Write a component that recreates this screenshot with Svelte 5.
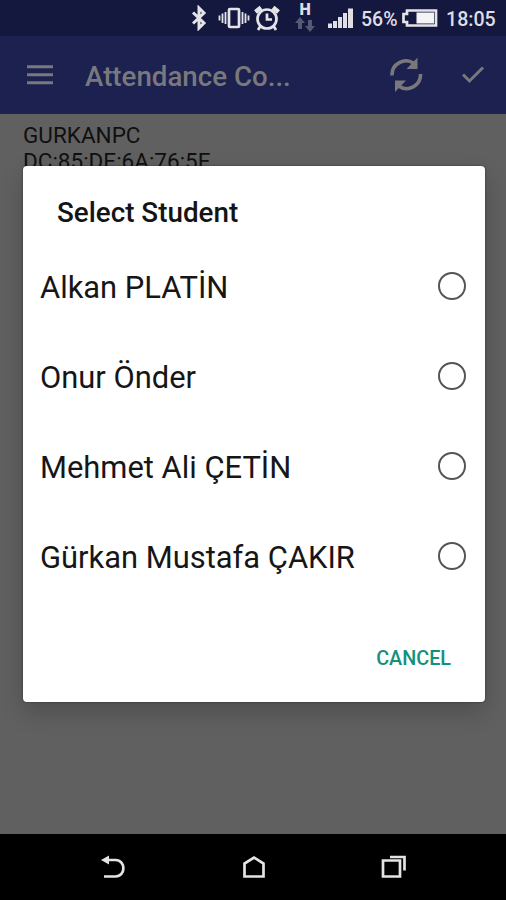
<script>
	const device = { name: 'GURKANPC', address: 'DC:85:DE:6A:76:5E' };
	const students = ['Alkan PLATİN', 'Onur Önder', 'Mehmet Ali ÇETİN', 'Gürkan Mustafa ÇAKIR'];

	let selected = $state(null);
	let open = $state(true);
</script>

<div class="screen">
	<div class="status">
		<svg class="bluetooth" width="16" height="26" viewBox="0 0 16 26">
			<path d="M2 7.5L13 18L8 23V3L13 8L2 18.5" />
		</svg>
		<svg class="vibrate" width="32" height="24" viewBox="0 0 32 24">
			<rect x="11" y="3" width="10" height="18" rx="1" />
			<path class="thin" d="M7.500 6V18M24.500 6V18M4.500 7.500V17M27.500 7.500V17M1.500 9.500V14.500M30.500 9.500V14.500" />
		</svg>
		<svg class="alarm" width="26" height="26" viewBox="0 0 26 26">
			<circle cx="13" cy="14" r="9.500" />
			<path d="M13 8.500V14.500H18M6.500 21L4 25M19.500 21L22 25" />
			<path class="bells" d="M1.500 7L7 2.500M19 2.500L24.500 7" />
		</svg>
		<div class="network">
			<span>H</span>
			<svg width="22" height="16" viewBox="0 0 22 16">
				<path d="M6 0L11 6H8V12H4V6H1ZM16 15L11 9H14V3H18V9H21Z" />
			</svg>
		</div>
		<svg class="signal" width="27" height="20" viewBox="0 0 27 20">
			<path d="M1 15.500H5V20H1ZM6 13H10V20H6ZM11 9H15V20H11ZM16 5H20V20H16ZM21 0.500H26V20H21Z" />
		</svg>
		<span class="percent">56%</span>
		<svg class="battery" width="36" height="18" viewBox="0 0 36 18">
			<path d="M5 1.500H34V16.500H5V13H1.500V5H5Z" />
			<rect x="14.500" y="3.500" width="17.500" height="11" />
		</svg>
		<span class="clock">18:05</span>
	</div>

	<header class="toolbar">
		<svg class="menu" width="28" height="20" viewBox="0 0 28 20">
			<path d="M1 1.700H27M1 9.700H27M1 17.700H27" />
		</svg>
		<h1>Attendance Co...</h1>
		<svg class="refresh" width="34" height="36" viewBox="0 0 34 36">
			<path class="arc" d="M3 18.500A14 14 0 0 1 25 6.500M31.500 17A14 14 0 0 1 9.500 29" />
			<path class="head" d="M28.500 0.500V12H17.500ZM6 35V23.500H17Z" />
		</svg>
		<svg class="check" width="24" height="20" viewBox="0 0 24 20">
			<path d="M2 9.500L8.500 16L22 2.500" />
		</svg>
	</header>

	<main>
		<p>{device.name}</p>
		<p>{device.address}</p>
	</main>

	{#if open}
		<div class="dialog" role="dialog" aria-label="Select Student">
			<h2>Select Student</h2>
			<div class="options">
				{#each students as student}
					<button class="option" onclick={() => (selected = student)}>
						<span>{student}</span>
						<i class="radio" class:on={selected === student}></i>
					</button>
				{/each}
			</div>
			<div class="actions">
				<button class="cancel" onclick={() => (open = false)}>CANCEL</button>
			</div>
		</div>
	{/if}

	<nav>
		<svg width="28" height="26" viewBox="0 0 28 26">
			<path d="M6 6H15.500C26 6 26 22.500 15.500 22.500H4" />
			<path class="tip" d="M1 6L9 1.500V10.500Z" />
		</svg>
		<svg width="28" height="26" viewBox="0 0 28 26">
			<path d="M4.500 22.500V9.500L14 3.500L23.500 9.500V22.500Z" />
		</svg>
		<svg width="28" height="26" viewBox="0 0 28 26">
			<path d="M3 6.500H20V22.500H3ZM10 3H24.500V16.500" />
		</svg>
	</nav>
</div>

<style>
	:global(body) {
		background: #606060;
	}

	.screen {
		position: relative;
		display: flex;
		flex-direction: column;
		height: 900px;
		overflow: hidden;
		background: #606060;
		font-family: Roboto, sans-serif;
	}

	svg {
		flex: none;
		fill: none;
		stroke: #e4e4e8;
		stroke-width: 2.7;
	}

	h1, h2, p { margin: 0; }

	button {
		padding: 0;
		border: 0;
		background: none;
		font-family: inherit;
		cursor: pointer;
	}

	.status {
		display: flex;
		align-items: center;
		height: 36px;
		padding-left: 191px;
		background: #14183f;
		color: #dedee4;
	}

	.bluetooth { stroke-width: 3; }
	.vibrate { margin-left: 11px; }
	.vibrate .thin { stroke-width: 1.8; }
	.alarm { margin-left: 4px; }
	.alarm .bells { stroke-width: 4.5; }

	.network {
		display: flex;
		flex-direction: column;
		align-items: center;
		margin-left: 14px;
		font-size: 16px;
		font-weight: 900;
		line-height: 14px;
	}
	.network svg { fill: #555974; stroke: none; }

	.signal { margin-left: 11px; fill: #dedee4; stroke: none; }
	.percent { width: 40px; margin-left: 7px; padding-top: 2px; font-size: 19.5px; font-weight: 500; }
	.battery { margin-left: 1px; }
	.battery rect { fill: #f4f4f6; stroke: none; }
	.clock { margin-left: 8px; padding-top: 2px; font-size: 19.6px; font-weight: 500; }

	.toolbar {
		display: flex;
		align-items: center;
		height: 78px;
		padding: 0 21px 0 26px;
		background: #1c214f;
	}
	.toolbar svg { stroke: #79797d; stroke-width: 3; }

	h1 {
		flex: 1;
		margin-left: 31px;
		padding-top: 3px;
		color: #79797d;
		font-size: 27.7px;
		font-weight: 500;
	}

	.toolbar .refresh { stroke-width: 3.6; }
	.toolbar .refresh .head { fill: #79797d; stroke: none; }
	.check { margin-left: 38px; }

	main {
		flex: 1;
		padding: 8px 23px;
		color: #101010;
		font-size: 22.5px;
		line-height: 26px;
	}

	.dialog {
		position: absolute;
		top: 166px;
		left: 23px;
		display: flex;
		flex-direction: column;
		width: 462px;
		height: 536px;
		border-radius: 4px;
		background: #fff;
		box-shadow: 0 0 2px rgba(0, 0, 0, 0.5), 0 10px 24px rgba(0, 0, 0, 0.2);
	}

	h2 {
		padding: 30px 34px 11px;
		color: #141414;
		font-size: 27.8px;
		font-weight: 500;
		line-height: 34px;
	}

	.options {
		display: flex;
		flex-direction: column;
	}

	.option {
		display: flex;
		align-items: center;
		justify-content: space-between;
		height: 90px;
		padding: 0 19px 0 17px;
		color: #161616;
		font-size: 30.9px;
		text-align: left;
	}
	.option span { padding-top: 2px; }

	.radio {
		box-sizing: border-box;
		width: 28px;
		height: 28px;
		border: 2px solid #555;
		border-radius: 50%;
	}
	.radio.on { background: #009688; }

	.actions {
		display: flex;
		justify-content: flex-end;
		padding: 44px 34px 0;
	}

	.cancel {
		color: #14917c;
		font-size: 19.8px;
		font-weight: 500;
		line-height: 28px;
	}

	nav {
		display: flex;
		align-items: center;
		justify-content: space-between;
		height: 66px;
		padding: 0 98px 0 100px;
		background: #000;
	}
	nav .tip { fill: #e4e4e8; stroke: none; }
</style>
